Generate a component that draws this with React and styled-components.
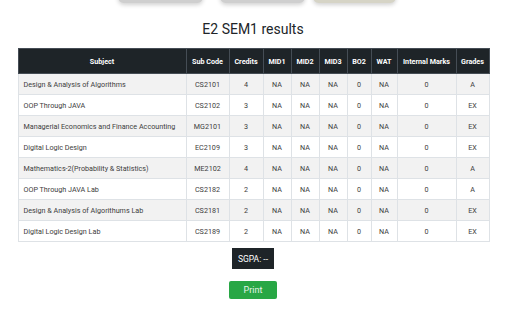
import React from "react";
import styled, { createGlobalStyle } from "styled-components";

const GlobalStyle = createGlobalStyle`
    html, body {
        margin: 0;
        padding: 0;
        background: #fff;
        font-family: Roboto, "Liberation Sans", sans-serif;
        overflow: hidden;
    }
`;

const Page = styled.div`
    width: 506px;
    display: flex;
    flex-direction: column;
    align-items: center;
`;

const Nav = styled.div`
    display: flex;
    margin-top: -30px;
    margin-left: 8px;
`;

const NavButton = styled.div`
    width: ${(p) => p.$w}px;
    height: 33px;
    margin-right: ${(p) => p.$gap}px;
    border-radius: 6px;
    background: ${(p) => p.$bg};
    box-shadow: 0 2px 4px rgba(0, 0, 0, 0.18);
`;

const Title = styled.h2`
    margin: 17px 0 0;
    font-size: 14px;
    font-weight: 400;
    color: #212529;
    line-height: 18px;
`;

const Table = styled.table`
    margin-top: 10px;
    margin-left: 1px;
    width: 471px;
    table-layout: fixed;
    border-collapse: collapse;
    font-size: 7.2px;
    color: #3d3d3d;
`;

const HeadCell = styled.th`
    height: 24px;
    padding: 0 2px;
    background: #1e2428;
    color: #fff;
    font-weight: 700;
    border: 1px solid #454d55;
    text-align: center;
    white-space: nowrap;
`;

const Row = styled.tr`
    background: ${(p) => (p.$odd ? "#f2f2f2" : "#fff")};
`;

const Cell = styled.td`
    height: 20px;
    padding: 0 ${(p) => (p.$left ? "5px" : "2px")};
    border: 1px solid #dee2e6;
    text-align: ${(p) => (p.$left ? "left" : "center")};
    white-space: nowrap;
    overflow: hidden;
`;

const Sgpa = styled.div`
    margin-top: 6px;
    width: 42px;
    height: 21px;
    background: #1e2428;
    color: #fff;
    font-size: 8.5px;
    display: flex;
    align-items: center;
    justify-content: center;
`;

const PrintButton = styled.button`
    margin-top: 12px;
    width: 48px;
    height: 18px;
    padding: 0;
    border: none;
    border-radius: 2px;
    background: #28a745;
    color: #e6f4ea;
    font-family: Roboto, "Liberation Sans", sans-serif;
    font-size: 9px;
    cursor: pointer;
`;

const widths = [168, 43, 34, 28, 28, 28, 24, 26, 59, 33];
const heads = ["Subject", "Sub Code", "Credits", "MID1", "MID2", "MID3", "BO2", "WAT", "Internal Marks", "Grades"];

const rows = [
    ["Design & Analysis of Algorithms", "CS2101", "4", "A"],
    ["OOP Through JAVA", "CS2102", "3", "EX"],
    ["Managerial Economics and Finance Accounting", "MG2101", "3", "EX"],
    ["Digital Logic Design", "EC2109", "3", "EX"],
    ["Mathematics-2(Probability & Statistics)", "ME2102", "4", "A"],
    ["OOP Through JAVA Lab", "CS2182", "2", "A"],
    ["Design & Analysis of Algorithums Lab", "CS2181", "2", "EX"],
    ["Digital Logic Design Lab", "CS2189", "2", "EX"],
];

const App = () => {
    return (
        <Page>
            <GlobalStyle />
            <Nav>
                <NavButton $w={85} $gap={17} $bg="#cfcfcf" />
                <NavButton $w={85} $gap={8} $bg="#cfcfcf" />
                <NavButton $w={83} $gap={0} $bg="#d6d4c6" />
            </Nav>
            <Title>E2 SEM1 results</Title>
            <Table>
                <colgroup>
                    {widths.map((w, i) => (
                        <col key={i} style={{ width: w }} />
                    ))}
                </colgroup>
                <thead>
                    <tr>
                        {heads.map((h) => (
                            <HeadCell key={h}>{h}</HeadCell>
                        ))}
                    </tr>
                </thead>
                <tbody>
                    {rows.map(([name, code, credits, grade], i) => (
                        <Row key={code} $odd={i % 2 === 0}>
                            <Cell $left>{name}</Cell>
                            <Cell>{code}</Cell>
                            <Cell>{credits}</Cell>
                            <Cell>NA</Cell>
                            <Cell>NA</Cell>
                            <Cell>NA</Cell>
                            <Cell>0</Cell>
                            <Cell>NA</Cell>
                            <Cell>0</Cell>
                            <Cell>{grade}</Cell>
                        </Row>
                    ))}
                </tbody>
            </Table>
            <Sgpa>SGPA: --</Sgpa>
            <PrintButton>Print</PrintButton>
        </Page>
    );
};

export default App;
